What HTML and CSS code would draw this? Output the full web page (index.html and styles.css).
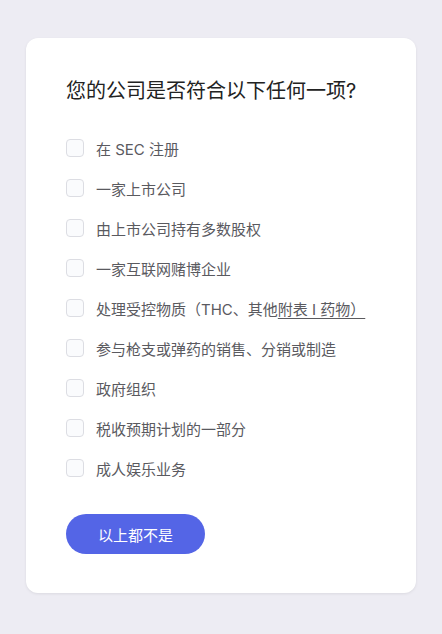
FILE: index.html
```html
<html lang="zh">
<head>
    <meta charset="UTF-8">
    <meta name="viewport" content="width=device-width, initial-scale=1.0">
    <title>公司资格</title>
    <link rel="stylesheet" href="styles.css">
</head>
<body>
    <div class="card">
        <h1>您的公司是否符合以下任何一项?</h1>
        <ul class="options">
            <li><span class="box"></span>在 SEC 注册</li>
            <li><span class="box"></span>一家上市公司</li>
            <li><span class="box"></span>由上市公司持有多数股权</li>
            <li><span class="box"></span>一家互联网赌博企业</li>
            <li><span class="box"></span>处理受控物质（THC、其他<u>附表 I 药物）</u></li>
            <li><span class="box"></span>参与枪支或弹药的销售、分销或制造</li>
            <li><span class="box"></span>政府组织</li>
            <li><span class="box"></span>税收预期计划的一部分</li>
            <li><span class="box"></span>成人娱乐业务</li>
        </ul>
        <button class="none">以上都不是</button>
    </div>
</body>
</html>
```

FILE: styles.css
```css
body {
    margin: 0;
    padding: 38px 26px 0;
    background: #edecf3;
    font-family: Inter, "Noto Sans CJK SC", sans-serif;
}
.card {
    background: #fff;
    border-radius: 12px;
    box-shadow: 0 1px 3px rgba(0, 0, 0, 0.08);
    padding: 39px 40px 40px;
    height: 476px;
}
h1 {
    margin: 0 0 23px;
    font-size: 20px;
    line-height: 28px;
    font-weight: 400;
    color: #222;
}
.options {
    list-style: none;
    margin: 0;
    padding: 0;
}
.options li {
    display: flex;
    align-items: center;
    height: 40px;
    font-size: 15px;
    color: #5a5a5f;
}
.box {
    width: 16px;
    height: 16px;
    border: 1px solid #dcdde3;
    border-radius: 4px;
    background: #fafbfd;
    margin-right: 12px;
    flex-shrink: 0;
}
.options u {
    text-underline-offset: 3px;
}
.none {
    margin-top: 26px;
    width: 139px;
    height: 40px;
    border: none;
    border-radius: 20px;
    background: #5465e6;
    color: #fff;
    font-family: inherit;
    font-size: 15px;
}
```
